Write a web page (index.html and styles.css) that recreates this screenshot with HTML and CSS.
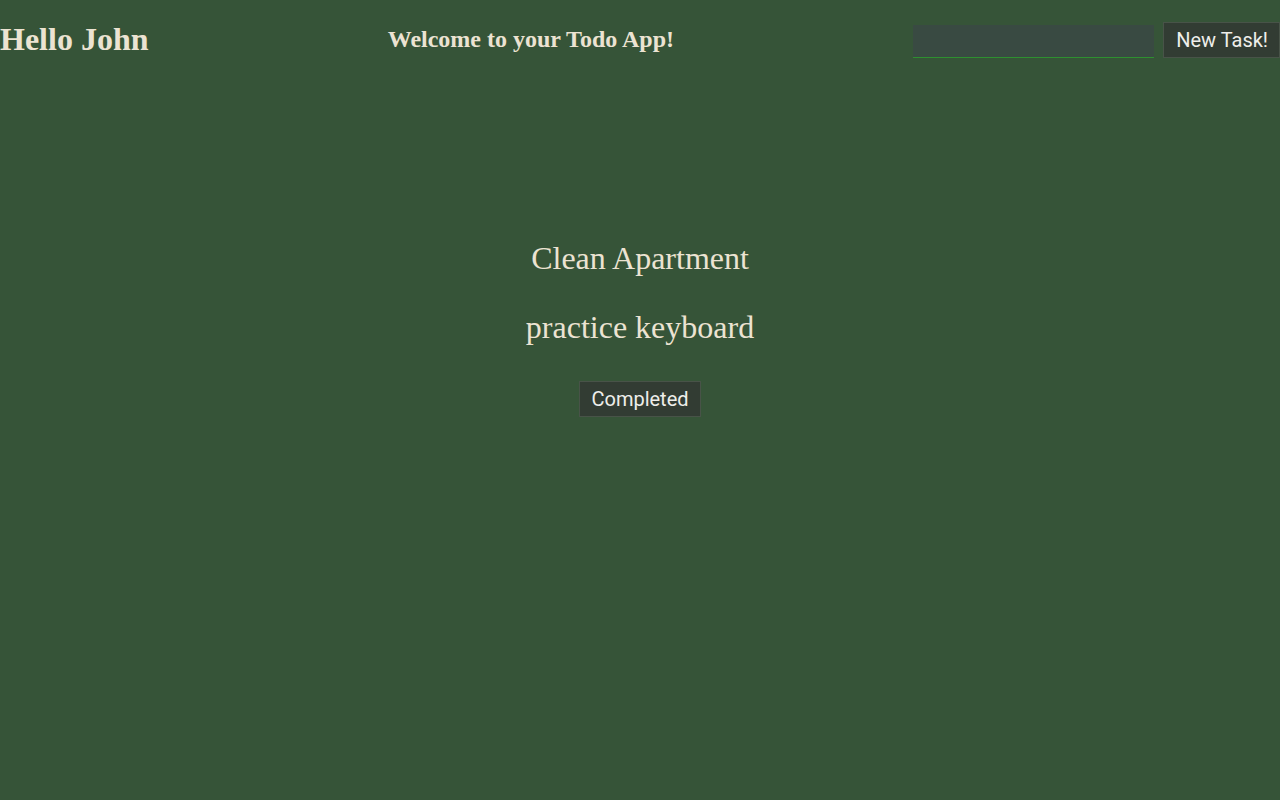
FILE: index.html
```html
<!DOCTYPE html>
<html>
<head>
<meta charset="utf-8">
<title>Todo App</title>
<link rel="stylesheet" href="styles.css">
</head>
<body>
<header class="topbar">
  <h1 class="hello">Hello John</h1>
  <h2 class="welcome">Welcome to your Todo App!</h2>
  <form class="new-task">
    <input class="task-input" type="text">
    <button class="btn" type="button">New Task!</button>
  </form>
</header>
<main class="tasks">
  <p class="task">Clean Apartment</p>
  <p class="task">practice keyboard</p>
  <button class="btn btn-complete" type="button">Completed</button>
</main>
</body>
</html>
```

FILE: styles.css
```css
html, body {
  margin: 0;
  padding: 0;
  height: 100%;
}
body {
  background: #365438;
  color: #ece3d2;
  font-family: "Liberation Serif", serif;
}
.topbar {
  display: flex;
  justify-content: space-between;
  align-items: center;
  height: 78px;
}
.hello {
  margin: 0;
  font-size: 32px;
  font-weight: bold;
}
.welcome {
  margin: 0;
  font-size: 24px;
  font-weight: bold;
}
.new-task {
  display: flex;
  align-items: flex-end;
  gap: 9px;
  margin: 2px 0 0;
}
.task-input {
  width: 241px;
  height: 33px;
  box-sizing: border-box;
  background: #394a42;
  border: none;
  border-bottom: 1px solid #2e8f30;
  color: #ece3d2;
  outline: none;
}
.btn {
  font-family: Roboto, sans-serif;
  font-size: 20px;
  color: #eeeeea;
  background: #323c33;
  border: 1px solid #485348;
  padding: 0 11px 0 12px;
  height: 36px;
  box-sizing: border-box;
}
.tasks {
  display: flex;
  flex-direction: column;
  align-items: center;
  padding-top: 130px;
}
.task {
  margin: 32px 0 0;
  font-size: 32px;
}
.btn-complete {
  margin-top: 35px;
  padding: 0 11px;
}
```
